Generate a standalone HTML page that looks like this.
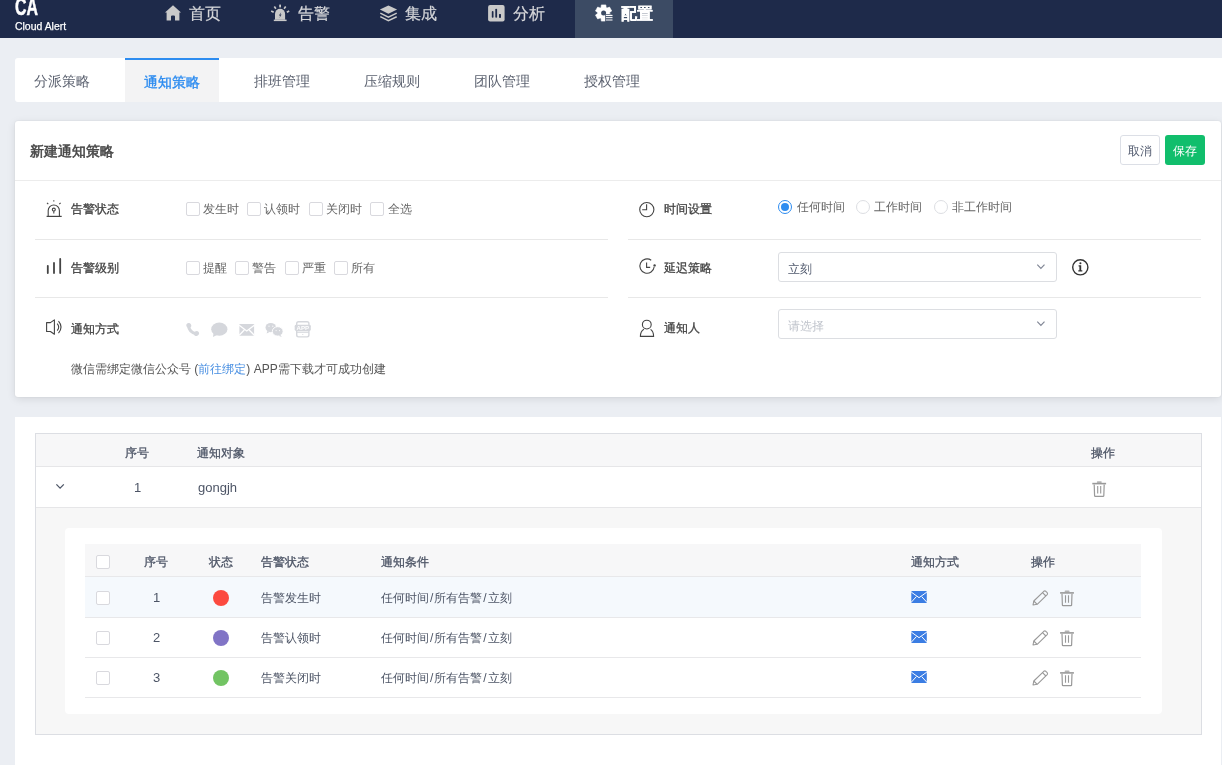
<!DOCTYPE html>
<html><head><meta charset="utf-8">
<style>
*{box-sizing:border-box;margin:0;padding:0}
html,body{width:1222px;height:765px;overflow:hidden}
body{will-change:transform;background:#ebeef3;font-family:"Liberation Sans",sans-serif;position:relative;color:#555}
.abs{position:absolute}
#hdr{position:absolute;left:0;top:0;width:1222px;height:38px;background:#1e2a4a}
.logo1{position:absolute;left:15px;top:-4px;font-size:23px;font-weight:bold;color:#fff;-webkit-text-stroke:0.5px #fff;line-height:23px;transform:scaleX(0.69);transform-origin:0 0}
.logo2{position:absolute;left:15px;top:20px;font-size:11px;color:#fff;line-height:12px;-webkit-text-stroke:0.25px #fff;transform:scaleX(0.95);transform-origin:0 0}
.nav{position:absolute;top:0;height:37px;color:#d6d7da;font-size:16px;-webkit-text-stroke:0.2px #d6d7da}
.nav .t{position:absolute;top:4px;line-height:20px;white-space:nowrap}
.nav svg{position:absolute}
#navact{position:absolute;left:575px;top:0;width:98px;height:38px;background:#3c4b64}
#tabs{position:absolute;left:15px;top:58px;width:1207px;height:44px;background:#fff;border-radius:3px 0 0 3px}
.tab{position:absolute;top:0;height:44px;line-height:46px;font-size:14px;color:#5c6270;width:94px;text-align:center}
.tab.on{background:#f3f3f4;color:#2d8cf0;-webkit-text-stroke:0.35px #2d8cf0;border-top:2px solid #2d8cf0;line-height:44px}
#card1{position:absolute;left:15px;top:121px;width:1206px;height:276px;background:#fff;border-radius:3px;box-shadow:0 0 2px rgba(0,0,0,.10),0 2px 8px rgba(0,0,0,.10)}
#card2{position:absolute;left:15px;top:417px;width:1206px;height:400px;background:#fff}
.lbl{position:absolute;font-size:12px;-webkit-text-stroke:0.3px #444;color:#444;line-height:16px;white-space:nowrap}
.txt{position:absolute;font-size:12px;color:#666;line-height:16px;white-space:nowrap}
.cb{position:absolute;width:14px;height:14px;border:1px solid #d9d9de;border-radius:2px;background:#fff}
.div{position:absolute;height:1px;background:#e8e8e8}
.th{position:absolute;font-size:12px;-webkit-text-stroke:0.3px #4d5566;color:#4d5566;line-height:16px;white-space:nowrap}
.td{position:absolute;font-size:12px;color:#4d5566;line-height:16px;white-space:nowrap}
</style></head><body>
<div id="hdr">
  <div class="logo1">CA</div>
  <div class="logo2">Cloud Alert</div>
  <div id="navact"></div>
  <!-- home -->
  <div class="nav" style="left:165px;width:60px">
    <span class="t" style="left:24px">首页</span>
  </div>
  <div class="nav" style="left:271px;width:70px">
    <span class="t" style="left:27px">告警</span>
  </div>
  <div class="nav" style="left:379px;width:70px">
    <span class="t" style="left:26px">集成</span>
  </div>
  <div class="nav" style="left:488px;width:70px">
    <span class="t" style="left:25px">分析</span>
  </div>
  <div class="nav" style="left:595px;width:70px;color:#fff;font-weight:bold;-webkit-text-stroke:0.2px #fff">
    <span class="t" style="left:26px">配置</span>
  </div>
</div>

<div id="tabs">
  <div class="tab" style="left:0">分派策略</div>
  <div class="tab on" style="left:110px">通知策略</div>
  <div class="tab" style="left:220px">排班管理</div>
  <div class="tab" style="left:330px">压缩规则</div>
  <div class="tab" style="left:440px">团队管理</div>
  <div class="tab" style="left:550px">授权管理</div>
</div>

<div id="card1">
  <div class="abs" style="left:15px;top:21px;font-size:14px;-webkit-text-stroke:0.55px #484848;color:#484848;line-height:18px">新建通知策略</div>
  <div class="abs" style="left:1105px;top:14px;width:40px;height:30px;border:1px solid #dcdfe6;border-radius:3px;font-size:12px;color:#515a6e;text-align:center;line-height:30px">取消</div>
  <div class="abs" style="left:1150px;top:14px;width:40px;height:30px;background:#11be6c;border-radius:3px;font-size:12px;color:#fff;text-align:center;line-height:32px">保存</div>
  <div class="div" style="left:0;top:59px;width:1206px;background:#ececec"></div>
  <div class="div" style="left:20px;top:118px;width:573px"></div>
  <div class="div" style="left:20px;top:176px;width:573px"></div>
  <div class="div" style="left:613px;top:118px;width:573px"></div>
  <div class="div" style="left:613px;top:176px;width:573px"></div>
<div class="lbl" style="left:56px;top:80px">告警状态</div>
<div class="lbl" style="left:56px;top:139px">告警级别</div>
<div class="lbl" style="left:56px;top:200px">通知方式</div>
<div class="lbl" style="left:649px;top:80px">时间设置</div>
<div class="lbl" style="left:649px;top:139px">延迟策略</div>
<div class="lbl" style="left:649px;top:199px">通知人</div>
<div class="cb" style="left:171px;top:81px"></div>
<div class="txt" style="left:188px;top:80px">发生时</div>
<div class="cb" style="left:232px;top:81px"></div>
<div class="txt" style="left:249px;top:80px">认领时</div>
<div class="cb" style="left:294px;top:81px"></div>
<div class="txt" style="left:311px;top:80px">关闭时</div>
<div class="cb" style="left:355px;top:81px"></div>
<div class="txt" style="left:373px;top:80px">全选</div>
<div class="cb" style="left:171px;top:140px"></div>
<div class="txt" style="left:188px;top:139px">提醒</div>
<div class="cb" style="left:220px;top:140px"></div>
<div class="txt" style="left:237px;top:139px">警告</div>
<div class="cb" style="left:270px;top:140px"></div>
<div class="txt" style="left:287px;top:139px">严重</div>
<div class="cb" style="left:319px;top:140px"></div>
<div class="txt" style="left:336px;top:139px">所有</div>
<div class="abs" style="left:763px;top:79px;width:14px;height:14px;border-radius:50%;border:1px solid #2d8cf0;background:#fff"><div style="position:absolute;left:2px;top:2px;width:8px;height:8px;border-radius:50%;background:#2d8cf0"></div></div>
<div class="txt" style="left:782px;top:78px">任何时间</div>
<div class="abs" style="left:841px;top:79px;width:14px;height:14px;border-radius:50%;border:1px solid #dcdee2;background:#fff"></div>
<div class="txt" style="left:859px;top:78px">工作时间</div>
<div class="abs" style="left:919px;top:79px;width:14px;height:14px;border-radius:50%;border:1px solid #dcdee2;background:#fff"></div>
<div class="txt" style="left:937px;top:78px">非工作时间</div>
<div class="abs" style="left:763px;top:131px;width:279px;height:30px;border:1px solid #dcdee2;border-radius:3px;background:#fff"><div class="txt" style="left:9px;top:8px;color:#515a6e">立刻</div></div>
<div class="abs" style="left:763px;top:188px;width:279px;height:30px;border:1px solid #dcdee2;border-radius:3px;background:#fff"><div class="txt" style="left:9px;top:8px;color:#c0c4cc">请选择</div></div>
<div class="txt" style="left:56px;top:240px;color:#555">微信需绑定微信公众号 (<span style="color:#4a90e2">前往绑定</span>) APP需下载才可成功创建</div>
</div>
<div id="card2">
<div class="abs" style="left:20px;top:16px;width:1167px;height:302px;border:1px solid #dcdee3;background:#f7f7f7"></div>
<div class="abs" style="left:21px;top:17px;width:1165px;height:33px;background:#f7f7f8;border-bottom:1px solid #e6e6e8"></div>
<div class="abs" style="left:21px;top:50px;width:1165px;height:41px;background:#fff;border-bottom:1px solid #e6e6e8"></div>
<div class="th" style="left:110px;top:28px">序号</div>
<div class="th" style="left:182px;top:28px">通知对象</div>
<div class="th" style="left:1076px;top:28px">操作</div>
<div class="td" style="left:119px;top:63px;font-size:13px">1</div>
<div class="td" style="left:183px;top:63px;font-size:13px">gongjh</div>
<div class="abs" style="left:50px;top:111px;width:1097px;height:186px;background:#fff;border-radius:4px"></div>
<div class="abs" style="left:70px;top:127px;width:1056px;height:33px;background:#f7f7f8;border-bottom:1px solid #e8e8ea"></div>
<div class="abs" style="left:70px;top:160px;width:1056px;height:41px;background:#f5f9fd;border-bottom:1px solid #e8e8ea"></div>
<div class="abs" style="left:70px;top:201px;width:1056px;height:40px;background:#fff;border-bottom:1px solid #e8e8ea"></div>
<div class="abs" style="left:70px;top:241px;width:1056px;height:40px;background:#fff;border-bottom:1px solid #e8e8ea"></div>
<div class="cb" style="left:81px;top:138px;width:14px;height:14px"></div>
<div class="th" style="left:129px;top:137px">序号</div>
<div class="th" style="left:194px;top:137px">状态</div>
<div class="th" style="left:246px;top:137px">告警状态</div>
<div class="th" style="left:366px;top:137px">通知条件</div>
<div class="th" style="left:896px;top:137px">通知方式</div>
<div class="th" style="left:1016px;top:137px">操作</div>
<div class="cb" style="left:81px;top:174px;width:14px;height:14px"></div>
<div class="td" style="left:138px;top:173px;font-size:13px">1</div>
<div class="abs" style="left:198px;top:173px;width:16px;height:16px;border-radius:50%;background:#fc4a3f"></div>
<div class="td" style="left:246px;top:173px">告警发生时</div>
<div class="td" style="left:366px;top:173px">任何时间<span style="margin:0 1px">/</span>所有告警<span style="margin:0 1px">/</span>立刻</div>
<div class="cb" style="left:81px;top:214px;width:14px;height:14px"></div>
<div class="td" style="left:138px;top:213px;font-size:13px">2</div>
<div class="abs" style="left:198px;top:213px;width:16px;height:16px;border-radius:50%;background:#8174c6"></div>
<div class="td" style="left:246px;top:213px">告警认领时</div>
<div class="td" style="left:366px;top:213px">任何时间<span style="margin:0 1px">/</span>所有告警<span style="margin:0 1px">/</span>立刻</div>
<div class="cb" style="left:81px;top:254px;width:14px;height:14px"></div>
<div class="td" style="left:138px;top:253px;font-size:13px">3</div>
<div class="abs" style="left:198px;top:253px;width:16px;height:16px;border-radius:50%;background:#72c463"></div>
<div class="td" style="left:246px;top:253px">告警关闭时</div>
<div class="td" style="left:366px;top:253px">任何时间<span style="margin:0 1px">/</span>所有告警<span style="margin:0 1px">/</span>立刻</div>
</div>
<svg class="abs" style="left:0;top:0;z-index:10;pointer-events:none" width="1222" height="765" viewBox="0 0 1222 765"><path d="M173 5.2 L181 12.6 L179.4 12.6 L179.4 20.5 L175 20.5 L175 16.5 Q175 15.4 173.9 15.4 L172.1 15.4 Q171 15.4 171 16.5 L171 20.5 L166.6 20.5 L166.6 12.6 L165 12.6 Z" fill="#c9c9c9"/>
<g fill="#c9c9c9"><rect x="279.2" y="4.6" width="1.8" height="2.8"/><path d="M274.3 6.5 L275.9 8.8" stroke="#c9c9c9" stroke-width="1.6"/><path d="M285.7 6.5 L284.1 8.8" stroke="#c9c9c9" stroke-width="1.6"/><path d="M271.2 11.0 L273.7 12.3" stroke="#c9c9c9" stroke-width="1.6"/><path d="M289.2 11.0 L286.8 12.3" stroke="#c9c9c9" stroke-width="1.6"/><path d="M275 19.8 V13.9 A5.05 5.05 0 0 1 285.1 13.9 V19.8 Z"/><rect x="273.8" y="19.6" width="12.8" height="1.5"/></g><path d="M281.2 12.2 L278.9 15.6 L280.3 15.4 L279.4 18 L281.6 14.5 L280.3 14.7 Z" fill="#1e2a4a"/>
<path d="M379.9 9.6 L388.4 5.4 L397.1 9.6 L388.4 13.7 Z" fill="#c9c9c9"/><path d="M380.3 13.1 L388.4 17.1 L396.7 13.1" fill="none" stroke="#c9c9c9" stroke-width="1.5"/><path d="M380.3 16.7 L388.4 20.7 L396.7 16.7" fill="none" stroke="#c9c9c9" stroke-width="1.5"/>
<rect x="488.1" y="4.9" width="16.5" height="16.5" rx="2" fill="#c9c9c9"/><g fill="#1e2a4a"><rect x="491.8" y="11.1" width="1.7" height="6.7" rx="0.8"/><rect x="495.3" y="8.7" width="1.8" height="9.1" rx="0.8"/><rect x="499" y="14.1" width="2" height="3.7"/></g>
<defs><mask id="gm"><rect x="590" y="0" width="30" height="25" fill="#fff"/><circle cx="603.6" cy="12.9" r="2.5" fill="#000"/><rect x="605.2" y="14.2" width="10" height="10" fill="#000"/></mask></defs><path d="M601.04 7.57 L601.36 4.90 L605.84 4.90 L606.16 7.57 L607.02 8.07 L609.49 7.01 L611.73 10.89 L609.58 12.50 L609.58 13.50 L611.73 15.11 L609.49 18.99 L607.02 17.93 L606.16 18.43 L605.84 21.10 L601.36 21.10 L601.04 18.43 L600.18 17.93 L597.71 18.99 L595.47 15.11 L597.62 13.50 L597.62 12.50 L595.47 10.89 L597.71 7.01 L600.18 8.07 Z" fill="#fff" stroke="#fff" stroke-width="0.6" stroke-linejoin="round" mask="url(#gm)"/><rect x="605.9" y="14.9" width="6.6" height="1.2" fill="#fff"/><rect x="605.9" y="17" width="6.6" height="1.2" fill="#e6e8ec"/><rect x="605.9" y="19.2" width="6.6" height="1.6" fill="#b9bec8"/>
<g fill="none" stroke="#444" stroke-width="1.1"><path d="M48.2 216 V210.6 A5.6 5.6 0 0 1 59.4 210.6 V216"/><path d="M46.6 216.4 H61.7" stroke-width="1.2"/><circle cx="53.8" cy="209.6" r="1.5"/><path d="M53.8 211.2 V213.6"/><path d="M53.8 200.2 V201.6 M47 202.8 L48.3 204.1 M60.6 202.8 L59.3 204.1" stroke-width="1.1"/></g>
<g stroke="#444" stroke-width="1.8" stroke-linecap="round"><path d="M47.8 265.8 V273.1 M54 263 V273.1 M60.2 259 V273.1"/></g>
<g fill="none" stroke="#444" stroke-width="1.1" stroke-linejoin="round"><path d="M46.6 322.6 H50.4 L54.4 319.9 V334.3 L50.4 331.5 H46.6 Z"/><path d="M57.2 323.6 Q60.2 327.1 57.2 330.6"/><path d="M58.5 321.2 Q63.6 327.1 58.5 333.2"/></g>
<g fill="#d5d7dc"><path d="M188.6 325.2 Q188.6 331.6 196.4 334" fill="none" stroke="#d5d7dc" stroke-width="3" stroke-linecap="round"/><ellipse cx="188.8" cy="325.5" rx="2.4" ry="2.5" transform="rotate(-30 188.8 325.5)"/><ellipse cx="196.5" cy="333.5" rx="2.6" ry="2.3" transform="rotate(-20 196.5 333.5)"/></g>
<ellipse cx="219.3" cy="329.2" rx="8.1" ry="6.6" fill="#d5d7dc"/><path d="M213.6 332.5 L213 337 L217.5 334.8 Z" fill="#d5d7dc"/>
<rect x="239.4" y="324" width="14.7" height="11.8" rx="0.6" fill="#d5d7dc"/><path d="M239.2 325.3 L246.75 331 L254.3 325.3 M239.2 335.3 L244.3 330 M254.3 335.3 L249.2 330" fill="none" stroke="#fff" stroke-width="1.25"/>
<ellipse cx="270.8" cy="327.6" rx="5.3" ry="4.6" fill="#d5d7dc"/><path d="M267.5 330.8 L266.6 333.6 L269.6 331.9Z" fill="#d5d7dc"/><ellipse cx="277.7" cy="331.4" rx="5.4" ry="4.7" fill="#d5d7dc" stroke="#fff" stroke-width="0.9"/><path d="M280.5 335 L281.8 337 L278.5 335.8Z" fill="#d5d7dc"/><g fill="#fff"><circle cx="269" cy="326.2" r="0.6"/><circle cx="272.8" cy="326.2" r="0.6"/><circle cx="276.1" cy="330.6" r="0.55"/><circle cx="279.6" cy="330.6" r="0.55"/></g>
<rect x="296.7" y="321.8" width="12.2" height="15.1" rx="1.8" fill="none" stroke="#d5d7dc" stroke-width="1.4"/><rect x="294.7" y="324.8" width="16.1" height="6.2" rx="1.4" fill="#d5d7dc"/><text x="302.75" y="330.3" font-family="Liberation Sans" font-size="6.2" font-weight="bold" fill="#fff" text-anchor="middle" textLength="12.5" lengthAdjust="spacingAndGlyphs">APP</text><path d="M296.7 332.2 H308.9" stroke="#d5d7dc" stroke-width="1.2"/><circle cx="302.8" cy="334.5" r="0.6" fill="#d5d7dc"/>
<g fill="none" stroke="#444" stroke-width="1.1"><circle cx="646.8" cy="209.6" r="7.1"/><path d="M646.6 204.3 V209.7 H642.2"/></g>
<g fill="none" stroke="#444" stroke-width="1.1"><path d="M651.2 260.2 A7.2 7.2 0 1 0 654.2 266.8"/><path d="M646.6 262.4 V267.4 H650.2"/></g><circle cx="654.6" cy="265.4" r="1.2" fill="#444"/>
<g fill="none" stroke="#444" stroke-width="1.1"><circle cx="646.8" cy="324.6" r="4.4"/><path d="M644 329.2 Q640.4 331 640.4 336.4 H653.6 Q653.6 331.5 650.6 329.4"/></g>
<g fill="none" stroke="#333" stroke-width="1.4"><circle cx="1080.3" cy="267.3" r="7.6"/></g><g fill="#333"><circle cx="1080.4" cy="263.2" r="1.05"/><path d="M1078.6 265.3 H1081.2 V270.2 H1082.3 V271.4 H1078.3 V270.2 H1079.4 V266.4 H1078.6 Z"/></g>
<path d="M1037.3 264.7 L1040.9 268.3 L1044.5 264.7" fill="none" stroke="#808695" stroke-width="1.2"/>
<path d="M1037.3 321.7 L1040.9 325.3 L1044.5 321.7" fill="none" stroke="#808695" stroke-width="1.2"/>
<path d="M56.4 484.4 L60.1 488.1 L63.8 484.4" fill="none" stroke="#4d5566" stroke-width="1.3"/>
<g fill="none" stroke="#999"><rect x="1096.8999999999999" y="481.29999999999995" width="4.8" height="1.6" fill="#999" stroke="none" rx="0.6" opacity="0.75"/><rect x="1092.3" y="482.79999999999995" width="13.8" height="1.6" fill="#999" stroke="none"/><path d="M1094.2 484.4 L1094.6 495.9 Q1094.7 496.4 1095.3 496.4 H1103.1 Q1103.7 496.4 1103.8 495.9 L1104.2 484.4" stroke-width="1.2"/><path d="M1097.7 485.9 V493.5 M1100.7 485.9 V493.5" stroke-width="1.1"/></g>
<g fill="none" stroke="#999"><rect x="1064.6999999999998" y="590.5999999999999" width="4.8" height="1.6" fill="#999" stroke="none" rx="0.6" opacity="0.75"/><rect x="1060.1" y="592.0999999999999" width="13.8" height="1.6" fill="#999" stroke="none"/><path d="M1062.0 593.6999999999999 L1062.3999999999999 605.1999999999999 Q1062.5 605.6999999999999 1063.1 605.6999999999999 H1070.8999999999999 Q1071.5 605.6999999999999 1071.6 605.1999999999999 L1072.0 593.6999999999999" stroke-width="1.2"/><path d="M1065.5 595.1999999999999 V602.8 M1068.5 595.1999999999999 V602.8" stroke-width="1.1"/></g>
<g fill="none" stroke="#999" stroke-width="1.1" stroke-linejoin="round"><path d="M1033.0 605.0 L1033.8 601.0 L1043.8 591.3 Q1044.8 590.5 1045.8 591.3 L1047.2 592.6999999999999 Q1047.9 593.6999999999999 1047.2 594.6 L1037.2 604.3 Z"/><path d="M1042.5 592.6 L1045.9 596.0 M1033.8 601.0 L1037.2 604.3"/></g>
<rect x="911.3" y="590.9" width="15.5" height="12.1" rx="0.8" fill="#3b7de3"/><path d="M911.3 592.1 L919.05 597.6759999999999 L926.8 592.1 M911.3 602.2 L916.415 596.587 M926.8 602.2 L921.685 596.587" fill="none" stroke="#fff" stroke-width="1.0"/>
<g fill="none" stroke="#999"><rect x="1064.6999999999998" y="630.5999999999999" width="4.8" height="1.6" fill="#999" stroke="none" rx="0.6" opacity="0.75"/><rect x="1060.1" y="632.0999999999999" width="13.8" height="1.6" fill="#999" stroke="none"/><path d="M1062.0 633.6999999999999 L1062.3999999999999 645.1999999999999 Q1062.5 645.6999999999999 1063.1 645.6999999999999 H1070.8999999999999 Q1071.5 645.6999999999999 1071.6 645.1999999999999 L1072.0 633.6999999999999" stroke-width="1.2"/><path d="M1065.5 635.1999999999999 V642.8 M1068.5 635.1999999999999 V642.8" stroke-width="1.1"/></g>
<g fill="none" stroke="#999" stroke-width="1.1" stroke-linejoin="round"><path d="M1033.0 645.0 L1033.8 641.0 L1043.8 631.3 Q1044.8 630.5 1045.8 631.3 L1047.2 632.6999999999999 Q1047.9 633.6999999999999 1047.2 634.6 L1037.2 644.3 Z"/><path d="M1042.5 632.6 L1045.9 636.0 M1033.8 641.0 L1037.2 644.3"/></g>
<rect x="911.3" y="630.9" width="15.5" height="12.1" rx="0.8" fill="#3b7de3"/><path d="M911.3 632.1 L919.05 637.6759999999999 L926.8 632.1 M911.3 642.2 L916.415 636.587 M926.8 642.2 L921.685 636.587" fill="none" stroke="#fff" stroke-width="1.0"/>
<g fill="none" stroke="#999"><rect x="1064.6999999999998" y="670.5999999999999" width="4.8" height="1.6" fill="#999" stroke="none" rx="0.6" opacity="0.75"/><rect x="1060.1" y="672.0999999999999" width="13.8" height="1.6" fill="#999" stroke="none"/><path d="M1062.0 673.6999999999999 L1062.3999999999999 685.1999999999999 Q1062.5 685.6999999999999 1063.1 685.6999999999999 H1070.8999999999999 Q1071.5 685.6999999999999 1071.6 685.1999999999999 L1072.0 673.6999999999999" stroke-width="1.2"/><path d="M1065.5 675.1999999999999 V682.8 M1068.5 675.1999999999999 V682.8" stroke-width="1.1"/></g>
<g fill="none" stroke="#999" stroke-width="1.1" stroke-linejoin="round"><path d="M1033.0 685.0 L1033.8 681.0 L1043.8 671.3 Q1044.8 670.5 1045.8 671.3 L1047.2 672.6999999999999 Q1047.9 673.6999999999999 1047.2 674.6 L1037.2 684.3 Z"/><path d="M1042.5 672.6 L1045.9 676.0 M1033.8 681.0 L1037.2 684.3"/></g>
<rect x="911.3" y="670.9" width="15.5" height="12.1" rx="0.8" fill="#3b7de3"/><path d="M911.3 672.1 L919.05 677.6759999999999 L926.8 672.1 M911.3 682.2 L916.415 676.587 M926.8 682.2 L921.685 676.587" fill="none" stroke="#fff" stroke-width="1.0"/></svg>
</body></html>
